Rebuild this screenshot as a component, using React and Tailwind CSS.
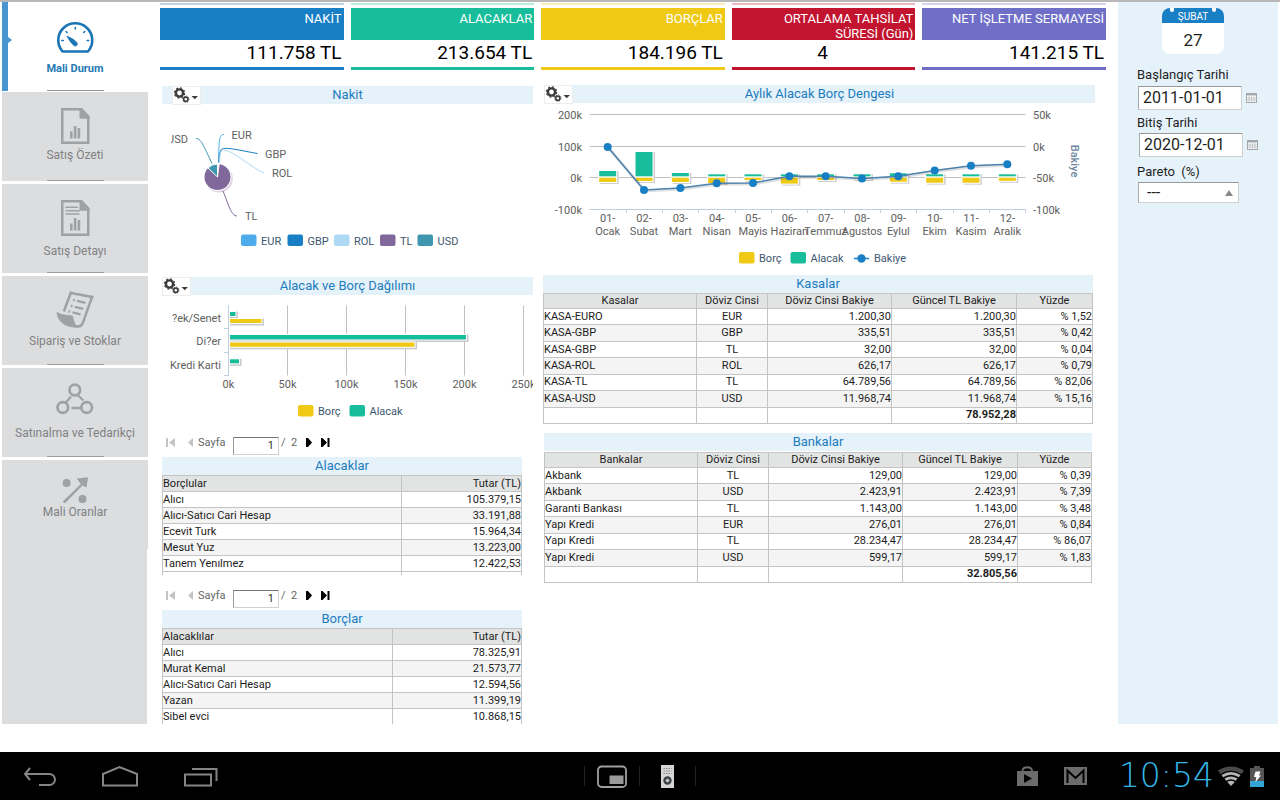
import React from "react";

const kpis = [
  { title: "NAKİT", value: "111.758 TL", bg: "bg-[#187fc5]", align: "text-right" },
  { title: "ALACAKLAR", value: "213.654 TL", bg: "bg-[#18be9b]", align: "text-right" },
  { title: "BORÇLAR", value: "184.196 TL", bg: "bg-[#efc914]", align: "text-right" },
  { title: "ORTALAMA TAHSİLAT SÜRESİ (Gün)", value: "4", bg: "bg-[#c2142f]", align: "text-center" },
  { title: "NET İŞLETME SERMAYESİ", value: "141.215 TL", bg: "bg-[#6f6fc8]", align: "text-right" },
];

const kasalar = [
  ["KASA-EURO", "EUR", "1.200,30", "1.200,30", "% 1,52"],
  ["KASA-GBP", "GBP", "335,51", "335,51", "% 0,42"],
  ["KASA-GBP", "TL", "32,00", "32,00", "% 0,04"],
  ["KASA-ROL", "ROL", "626,17", "626,17", "% 0,79"],
  ["KASA-TL", "TL", "64.789,56", "64.789,56", "% 82,06"],
  ["KASA-USD", "USD", "11.968,74", "11.968,74", "% 15,16"],
];

const bankalar = [
  ["Akbank", "TL", "129,00", "129,00", "% 0,39"],
  ["Akbank", "USD", "2.423,91", "2.423,91", "% 7,39"],
  ["Garanti Bankası", "TL", "1.143,00", "1.143,00", "% 3,48"],
  ["Yapı Kredi", "EUR", "276,01", "276,01", "% 0,84"],
  ["Yapı Kredi", "TL", "28.234,47", "28.234,47", "% 86,07"],
  ["Yapı Kredi", "USD", "599,17", "599,17", "% 1,83"],
];

const alacaklar = [
  ["Alıcı", "105.379,15"],
  ["Alıcı-Satıcı Cari Hesap", "33.191,88"],
  ["Ecevit Turk", "15.964,34"],
  ["Mesut Yuz", "13.223,00"],
  ["Tanem Yenılmez", "12.422,53"],
];

const borclar = [
  ["Alıcı", "78.325,91"],
  ["Murat Kemal", "21.573,77"],
  ["Alıcı-Satıcı Cari Hesap", "12.594,56"],
  ["Yazan", "11.399,19"],
  ["Sibel evci", "10.868,15"],
];

const months = [
  { no: "01-", name: "Ocak", top: 171, bottom: 182, y: 147 },
  { no: "02-", name: "Subat", top: 152, bottom: 181, y: 190 },
  { no: "03-", name: "Mart", top: 173, bottom: 182, y: 188 },
  { no: "04-", name: "Nisan", top: 174.3, bottom: 183, y: 183.3 },
  { no: "05-", name: "Mayis", top: 174.3, bottom: 180, y: 183 },
  { no: "06-", name: "Haziran", top: 174.3, bottom: 183.6, y: 176.3 },
  { no: "07-", name: "Temmuz", top: 174.3, bottom: 180, y: 176.3 },
  { no: "08-", name: "Agustos", top: 174.3, bottom: 179, y: 178.5 },
  { no: "09-", name: "Eylul", top: 173.3, bottom: 181.7, y: 176.3 },
  { no: "10-", name: "Ekim", top: 174.3, bottom: 182.7, y: 170.5 },
  { no: "11-", name: "Kasim", top: 174.3, bottom: 182.7, y: 165.7 },
  { no: "12-", name: "Aralik", top: 174.3, bottom: 180.8, y: 164.2 },
];
const monthX = (i) => 607.7 + i * 36.33;

function GaugeIcon() {
  return (
    <svg className="block h-[37px] w-10" viewBox="55 17 40 37" fill="none" stroke="#1b75b5" strokeWidth="2.2" strokeLinecap="round" aria-hidden="true">
      <path d="M62.5 51.5a17 17 0 1 1 25.5 0z" strokeWidth="2.6" strokeLinejoin="round" />
      <path d="M75.3 27.5v1.5M66 31.5l1 1M84.7 31.500l-1 1M61.800 40.500h1.500M87.200 40.500h1.500" strokeWidth="1.600" />
      <path d="M67.200 36.400c3.500 1 8 3.800 9.800 6.400 1.200 2-1.200 4.200-3 2.800-2.400-2-5-5.700-6.800-9.200z" fill="#1b75b5" strokeWidth="0.800" />
    </svg>
  );
}

function ReportIcon({ lines }) {
  return (
    <svg className="block h-[37px] w-10" viewBox="0 0 40 37" fill="#9fa1a3" aria-hidden="true">
      <path d="M6 1h20.500l8 8.500V37H6zM8.500 3.500v31H32V11.500h-7.500v-8z" fillRule="evenodd" />
      <path d="M25 1h2l7.500 8v2.500h-9.500z" />
      <path d="M15 24.500h2.600v7H15zM18.800 19h2.600v12.500h-2.600zM22.600 21h2.600v10.500h-2.600z" />
      {lines && <path d="M10.500 7.500h12.500v1.500H10.500zM10.500 11h14v1.500h-14zM10.500 14.300h14v1.500h-14z" />}
    </svg>
  );
}

function ScrollIcon() {
  return (
    <svg className="block h-[37px] w-10" viewBox="55 291 40 37" fill="none" stroke="#9fa1a3" aria-hidden="true">
      <path d="M63.800 311.500l7-18.700c7 2 14 2.500 21.400 4.200-3.200 8-6 16.500-9 25-1.400 4-4.500 5-7.500 4" strokeWidth="2.500" />
      <path d="M57 312.300c5 3.300 10.500 2.700 15.500 3.700 1.200 4 1.500 8.500 5 11-8.500 1.200-20.500-4.200-20.500-14.700z" fill="#9fa1a3" strokeWidth="0.800" />
      <path d="M77 300.800l8.500 2M74.800 306.800l8.500 2M72.500 312.300l8 2" strokeWidth="2.300" />
      <path d="M73 299.800l1.800.4M70.800 305.800l1.800.4M68.500 311.300l1.800.4" strokeWidth="2.300" />
    </svg>
  );
}

function NetworkIcon() {
  return (
    <svg className="block h-[37px] w-10" viewBox="55 383 40 37" fill="none" stroke="#9fa1a3" strokeWidth="2.700" aria-hidden="true">
      <circle cx="74.800" cy="390" r="5.300" />
      <circle cx="62.800" cy="407.500" r="5.300" />
      <circle cx="86.700" cy="407.500" r="5.300" />
      <path d="M71 396.500l-5.500 6.500M78 395.500l5.500 5M71.500 408h9.500" strokeWidth="2.300" />
    </svg>
  );
}

function RatioIcon() {
  return (
    <svg className="block h-7 w-10" viewBox="55 475 40 28" fill="#9fa1a3" aria-hidden="true">
      <circle cx="66.700" cy="483" r="4" />
      <circle cx="82.500" cy="499" r="4" />
      <path d="M62.800 501.500l18-17.500-4.300-5.500 11.500-1.300-1.500 10.300-4-2-17.700 18z" />
    </svg>
  );
}

const navItems = [
  { label: "Satış Özeti", icon: <ReportIcon />, gap: "mt-0.5" },
  { label: "Satış Detayı", icon: <ReportIcon lines />, gap: "mt-1.5" },
  { label: "Sipariş ve Stoklar", icon: <ScrollIcon />, gap: "mt-1" },
  { label: "Satınalma ve Tedarikçi", icon: <NetworkIcon />, gap: "mt-1" },
  { label: "Mali Oranlar", icon: <RatioIcon />, gap: "mt-0", last: true },
];

function Sidebar() {
  return (
    <nav className="flex w-[148px] shrink-0 flex-col pl-0.5 text-[12px] leading-[18px] text-[#7f8183]">
      <a href="#mali-durum" className="relative mb-px flex h-[89px] flex-col items-center border-l-[6px] border-[#4796cf] pt-[15px] pr-[6px] text-[11px] font-bold text-[#2478b4]">
        <span className="absolute top-[35px] left-0 border-y-[3px] border-l-4 border-y-transparent border-l-[#4796cf]" />
        <GaugeIcon />
        <span className="mt-1.5">Mali Durum</span>
        <span className="absolute bottom-0 left-[39px] h-px w-[57px] bg-[#969696]" />
      </a>
      <div className="flex grow flex-col gap-[3px]">
        {navItems.map((n) => (
          <a key={n.label} href="#" className="relative flex h-[89px] flex-col items-center bg-[#dcdddf] pt-[15px]">
            {n.icon}
            <span className={n.gap}>{n.label}</span>
            {!n.last && <span className="absolute bottom-0 left-[45px] h-px w-[57px] bg-[#9c9d9f]" />}
          </a>
        ))}
        <div className="-mt-[3px] mr-px grow bg-[#dcdddf]" />
      </div>
    </nav>
  );
}

function GearButton({ className }) {
  return (
    <button type="button" aria-label="Seçenekler" className={"absolute top-0 flex h-[19px] w-[29px] items-start border border-[#ececec] bg-white " + className}>
      <svg className="block h-[17px] w-[26px]" viewBox="0 0 26 17" fill="none" stroke="#3c3c3c" aria-hidden="true">
        <circle cx="6.500" cy="6" r="3.600" strokeWidth="2.400" />
        <circle cx="6.500" cy="6" r="5.100" strokeWidth="1.200" strokeDasharray="2 2" />
        <circle cx="12.800" cy="12.200" r="2.100" strokeWidth="1.600" />
        <circle cx="12.800" cy="12.200" r="3.200" strokeWidth="0.900" strokeDasharray="1.250 1.250" />
        <path d="M18.500 9h6.500l-3.200 3.300z" fill="#3c3c3c" stroke="none" />
      </svg>
    </button>
  );
}

function TitleBar({ children, gear }) {
  return (
    <div className="relative h-[18px] bg-[#e6f2f9]">
      <h2 className="text-center text-[13px] leading-[18px] text-[#1c7cc0]">{children}</h2>
      {gear && <GearButton className={gear} />}
    </div>
  );
}

function PieChart() {
  const legend = [
    ["EUR", "#4facec", 241], ["GBP", "#187fc5", 287.500], ["ROL", "#add9f4", 334], ["TL", "#80689a", 380], ["USD", "#3e97ae", 417.500],
  ];
  return (
    <svg className="block h-[173px] w-full" viewBox="162 104 371 173" preserveAspectRatio="xMinYMin meet" fontSize="11" fill="#606060" role="img" aria-label="Nakit">
      <circle cx="218.800" cy="178.500" r="14" fill="#ddd4e0" />
      <circle cx="217.500" cy="177" r="14" fill="#fff" />
      <circle cx="217.500" cy="177" r="13" fill="#80689a" />
      <path d="M217.500 177L208 168a13 13 0 0 1 9.500-4z" fill="#3e97ae" stroke="#fff" strokeWidth="1" />
      <path d="M217.500 177V163.500h1.800z" fill="#fff" stroke="#fff" strokeWidth="0.800" />
      <g fill="none">
        <path d="M196 138.500c5 0 7 6 16 25" stroke="#3e97ae" />
        <path d="M224 134.500c-5 0-5 6-5.500 28" stroke="#4facec" />
        <path d="M257.500 153.500c-12-2-28-6-34-5-4 .6-4 6-4.500 14" stroke="#187fc5" />
        <path d="M264 173c-12-5-32-23-40-23-4 0-4 5-4.500 12" stroke="#add9f4" />
        <path d="M223 191c5 12 8 25 14 25" stroke="#80689a" />
      </g>
      <text x="188" y="143" textAnchor="end">USD</text>
      <rect x="162" y="130" width="9" height="18" fill="#fff" />
      <text x="231.500" y="139">EUR</text>
      <text x="265" y="158">GBP</text>
      <text x="272" y="177">ROL</text>
      <text x="245" y="220">TL</text>
      {legend.map(([n, c, x]) => (
        <g key={n}>
          <rect x={x} y="234.500" width="15.500" height="11.500" rx="2" fill={c} />
          <text x={x + 20} y="245" fill="#3e576f">{n}</text>
        </g>
      ))}
    </svg>
  );
}

function BarChart() {
  const bars = [
    [312, 235.500, 4, "#18be9b"], [319, 261.500, 4, "#efc914"], [335, 466, 4.500, "#18be9b"], [342.500, 414.500, 4.300, "#efc914"], [359.300, 239, 4, "#18be9b"],
  ];
  const ticks = [[228.500, "0k"], [287.500, "50k"], [346.500, "100k"], [405.500, "150k"], [464.500, "200k"], [523.500, "250k"]];
  return (
    <svg className="block h-[130px] w-full overflow-hidden" viewBox="162 295 371 130" preserveAspectRatio="xMinYMin meet" fontSize="11" fill="#606060" role="img" aria-label="Alacak ve Borç Dağılımı">
      {ticks.map(([x, t]) => (
        <g key={t}>
          <path d={`M${x} 305.500V375.500`} stroke="#c0c0c0" />
          <text x={x} y="388" textAnchor="middle">{t}</text>
        </g>
      ))}
      <path d="M228.500 305.500V375.500M224 328.500h5M224 352.500h5M224 375.500h5" stroke="#c0d0e0" />
      {bars.map(([y, x2, h, c]) => (
        <g key={y}>
          <rect x="230" y={y - 0.500} width={x2 - 227.500} height={h + 3} fill="#c9c9c9" />
          <rect x="229" y={y - 1} width={x2 - 228} height={h + 2} fill="#fff" />
          <rect x="230" y={y} width={x2 - 230} height={h} fill={c} />
        </g>
      ))}
      <text x="221" y="322" textAnchor="end">?ek/Senet</text>
      <text x="221" y="345" textAnchor="end">Di?er</text>
      <text x="221" y="369" textAnchor="end">Kredi Karti</text>
      <rect x="298" y="405" width="15.500" height="11.500" rx="2" fill="#efc914" />
      <text x="318" y="415" fill="#3e576f">Borç</text>
      <rect x="349.500" y="405" width="15.500" height="11.500" rx="2" fill="#18be9b" />
      <text x="369.500" y="415" fill="#3e576f">Alacak</text>
    </svg>
  );
}

function BalanceChart() {
  const rows = [[114.500, "200k", "50k"], [146.500, "100k", "0k"], [177.500, "0k", "-50k"], [209.500, "-100k", "-100k"]];
  const line = months.map((m, i) => `${monthX(i)},${m.y}`).join(" ");
  return (
    <svg className="block h-[173px] w-full" viewBox="544 103 551 173" preserveAspectRatio="xMinYMin meet" fontSize="11" fill="#606060" role="img" aria-label="Aylık Alacak Borç Dengesi">
      {rows.map(([y, l, r]) => (
        <g key={y}>
          <path d={`M589.500 ${y}H1025.500`} stroke="#c0c0c0" />
          <text x="582" y={y + 4.500} textAnchor="end">{l}</text>
          <text x="1033" y={y + 4.500}>{r}</text>
        </g>
      ))}
      {months.map((m, i) => {
        const x = monthX(i) - 8.500;
        return (
          <g key={m.no}>
            <rect x={x + 1} y={m.top} width="18.500" height={m.bottom - m.top + 2} fill="#cfcfcf" />
            <rect x={x - 1} y={m.top - 1} width="19" height={m.bottom - m.top + 2} fill="#fff" />
            <rect x={x} y={m.top} width="17" height={176.300 - m.top} fill="#18be9b" />
            <rect x={x} y="177.700" width="17" height={m.bottom - 177.700} fill="#efc914" />
            <path d={`M${Math.round(monthX(i) + 18) + 0.500} 209v4`} stroke="#c0d0e0" />
            <text x={monthX(i)} y="222" textAnchor="middle">{m.no}</text>
            <text x={monthX(i)} y="235" textAnchor="middle">{m.name}</text>
          </g>
        );
      })}
      <path d="M589.500 209.500H1025.500" stroke="#c0d0e0" />
      <polyline points={line} fill="none" stroke="#000" strokeOpacity="0.120" strokeWidth="3" transform="translate(1 1)" />
      <polyline points={line} fill="none" stroke="#4a82b0" strokeWidth="1.500" />
      {months.map((m, i) => <circle key={m.no} cx={monthX(i)} cy={m.y} r="4" fill="#187fc5" />)}
      <text transform="translate(1071 161) rotate(90)" textAnchor="middle" fontWeight="500" fill="#6d869f">Bakiye</text>
      <g fill="#3e576f">
        <rect x="739" y="252" width="15.500" height="11.500" rx="2" fill="#efc914" />
        <text x="759" y="262">Borç</text>
        <rect x="790.500" y="252" width="15.500" height="11.500" rx="2" fill="#18be9b" />
        <text x="810.500" y="262">Alacak</text>
        <path d="M854 258.500h15" stroke="#187fc5" strokeWidth="1.500" />
        <circle cx="861.500" cy="258.500" r="4.200" fill="#187fc5" />
        <text x="874" y="262">Bakiye</text>
      </g>
    </svg>
  );
}

function AccountTable({ first, rows, total, cols }) {
  const heads = [first, "Döviz Cinsi", "Döviz Cinsi Bakiye", "Güncel TL Bakiye", "Yüzde"];
  return (
    <table className="h-[131px] w-full table-fixed border-collapse border border-[#c4c4c4] text-[11px] leading-[14px] text-[#1c1c1c]">
      <colgroup>{cols.map((c, i) => <col key={i} className={c} />)}</colgroup>
      <thead>
        <tr className="bg-[#e2e4e3]">
          {heads.map((h) => <th key={h} className="border border-[#c4c4c4] p-0 font-normal">{h}</th>)}
        </tr>
      </thead>
      <tbody>
        {rows.map((r, i) => (
          <tr key={i} className="even:bg-[#f4f4f4]">
            {r.map((c, j) => (
              <td key={j} className={"border border-[#c4c4c4] p-0 " + (j === 0 ? "text-left" : j === 1 ? "text-center" : "text-right")}>{c}</td>
            ))}
          </tr>
        ))}
        <tr>
          <td className="border border-[#c4c4c4] p-0" />
          <td className="border border-[#c4c4c4] p-0" />
          <td className="border border-[#c4c4c4] p-0" />
          <td className="border border-[#c4c4c4] p-0 text-right font-bold">{total}</td>
          <td className="border border-[#c4c4c4] p-0" />
        </tr>
      </tbody>
    </table>
  );
}

function PartyTable({ first, rows, col }) {
  return (
    <table className="w-full table-fixed border-collapse text-[11px] leading-[15px] text-[#1c1c1c]">
      <colgroup><col className={col} /><col /></colgroup>
      <thead>
        <tr className="h-4 bg-[#e2e4e3]">
          <th className="border border-[#c4c4c4] p-0 text-left font-normal">{first}</th>
          <th className="border border-[#c4c4c4] p-0 text-right font-normal">Tutar (TL)</th>
        </tr>
      </thead>
      <tbody>
        {rows.map(([a, b]) => (
          <tr key={a} className="h-4 even:bg-[#f4f4f4]">
            <td className="border border-[#c4c4c4] p-0">{a}</td>
            <td className="border border-[#c4c4c4] p-0 text-right">{b}</td>
          </tr>
        ))}
        <tr className="h-4">
          <td className="border border-[#c4c4c4] p-0" />
          <td className="border border-[#c4c4c4] p-0" />
        </tr>
      </tbody>
    </table>
  );
}

function Pager({ id }) {
  return (
    <div className="flex h-[23px] items-start pl-1 text-[11px] leading-[18px] text-[#666]">
      <button type="button" aria-label="İlk sayfa" disabled className="mt-1 mr-3">
        <svg className="block h-[9px] w-[10px]" viewBox="0 0 10 9" fill="#c4c4c4"><path d="M0 0h2v9H0zM9 0v9L3 4.500z" /></svg>
      </button>
      <button type="button" aria-label="Önceki sayfa" disabled className="mt-1 mr-1">
        <svg className="block h-[9px] w-[6px]" viewBox="0 0 6 9" fill="#c4c4c4"><path d="M5 0v9L0 4.500z" /></svg>
      </button>
      <label htmlFor={id} className="w-[35px]">Sayfa</label>
      <input id={id} defaultValue="1" className="mt-[3px] h-[18px] w-[46px] border border-[#d0d0d0] border-t-[#777] border-l-[#999] bg-white pr-1 text-right text-[11px] text-[#333]" />
      <span className="ml-0.5 whitespace-pre">/  2</span>
      <button type="button" aria-label="Sonraki sayfa" className="mt-1 ml-[9px]">
        <svg className="block h-[9px] w-[6px]" viewBox="0 0 6 9" fill="#000"><path d="M0 0l2 0 4 4.500L2 9H0z" /></svg>
      </button>
      <button type="button" aria-label="Son sayfa" className="mt-1 ml-[9px]">
        <svg className="block h-[9px] w-[9px]" viewBox="0 0 9 9" fill="#000"><path d="M0 0h1.500L6 4.500 1.500 9H0zM6.500 0h2v9h-2z" /></svg>
      </button>
    </div>
  );
}

function CalendarButton({ label }) {
  return (
    <button type="button" aria-label={label} className="ml-1">
      <svg className="block h-[10px] w-[11px]" viewBox="0 0 11 10" aria-hidden="true">
        <rect x="0.500" y="0.500" width="10" height="9" fill="#fff" stroke="#a3a8ac" />
        <path d="M0 1.500h11" stroke="#a3a8ac" strokeWidth="2" />
        <path d="M3 3v6M5.500 3v6M8 3v6M1 5h9M1 7h9" stroke="#b9bdc1" strokeWidth="0.800" />
      </svg>
    </button>
  );
}

function FilterPanel() {
  return (
    <aside className="w-[162px] shrink-0 border-r-2 border-white bg-[#e6f2f9] pl-[19px] text-[13px] text-[#1f1f1f]">
      <div className="mt-1.5 ml-[25px] w-[62px] overflow-hidden rounded-lg bg-white text-center">
        <div className="relative h-[15px] bg-[#187fc5] text-[10px] leading-[17px] text-white">
          ŞUBAT
          <span className="absolute top-0 left-2 h-1 w-1 rounded-b bg-white" />
          <span className="absolute top-0 right-2 h-1 w-1 rounded-b bg-white" />
        </div>
        <div className="h-[31px] text-[17px] leading-[35px]">27</div>
      </div>
      <label htmlFor="start" className="mt-3 block leading-[18px]">Başlangıç Tarihi</label>
      <div className="mt-0.5 flex items-center pl-px">
        <input id="start" defaultValue="2011-01-01" className="h-6 w-[104px] border border-[#d0d0d0] border-t-[#999] border-l-[#aaa] bg-white pl-1 text-[16px]" />
        <CalendarButton label="Başlangıç tarihi seç" />
      </div>
      <label htmlFor="end" className="mt-1 block leading-[18px]">Bitiş Tarihi</label>
      <div className="mt-px flex items-center pl-0.5">
        <input id="end" defaultValue="2020-12-01" className="h-6 w-[104px] border border-[#d0d0d0] border-t-[#999] border-l-[#aaa] bg-white pl-1 text-[16px]" />
        <CalendarButton label="Bitiş tarihi seç" />
      </div>
      <label htmlFor="pareto" className="mt-1.5 block leading-[18px] whitespace-pre">Pareto  (%)</label>
      <div className="relative mt-px ml-px w-[101px]">
        <select id="pareto" className="block h-[21px] w-full appearance-none border border-[#d0d0d0] border-t-[#999] border-l-[#aaa] bg-white pl-2 text-[16px] leading-none">
          <option>---</option>
        </select>
        <span className="pointer-events-none absolute top-2 right-1.5 border-x-4 border-b-[6px] border-x-transparent border-b-[#888]" />
      </div>
    </aside>
  );
}

function SystemBar() {
  return (
    <footer className="grid h-12 grid-cols-3 items-center bg-black">
      <div className="flex items-center pl-[22px]">
        <button type="button" aria-label="Geri">
          <svg className="block h-6 w-9" viewBox="0 0 36 24" fill="none" stroke="#858585" strokeWidth="2"><path d="M8 4L3 10l5 6M3 10h24.500a5.500 5.500 0 0 1 0 11H17" /></svg>
        </button>
        <button type="button" aria-label="Ana ekran" className="ml-[42px]">
          <svg className="block h-6 w-10" viewBox="0 0 40 24" fill="none" stroke="#858585" strokeWidth="2"><path d="M3 21.500V10L19.500 3 37 10v11.500z" /></svg>
        </button>
        <button type="button" aria-label="Son uygulamalar" className="ml-[42px]">
          <svg className="block h-6 w-9" viewBox="0 0 36 24" fill="none" stroke="#858585" strokeWidth="2"><path d="M3 10.500h26V21.500H3zM10 5h24.500v12" /></svg>
        </button>
      </div>
      <div className="flex items-center justify-center">
        <span className="h-5 w-px bg-[#222]" />
        <button type="button" aria-label="Küçük uygulamalar" className="mx-3">
          <svg className="block h-6 w-[30px]" viewBox="0 0 30 24"><rect x="1" y="2.500" width="28" height="20.500" rx="3.500" fill="none" stroke="#a0a0a0" strokeWidth="1.800" /><rect x="12.500" y="11.500" width="14" height="8.500" fill="#999" /></svg>
        </button>
        <span className="h-5 w-px bg-[#222]" />
        <button type="button" aria-label="Uzaktan kumanda" className="mx-[21px]">
          <svg className="block h-6 w-[13px]" viewBox="0 0 13 24"><path d="M0 1h13v23H0z" fill="#d6d6d6" /><path d="M2.500 4.500h8M2.500 7h8M2.500 9.500h8" stroke="#888" strokeDasharray="1.500 1" /><circle cx="6.500" cy="16.500" r="4.200" fill="#3f4346" /><circle cx="6.500" cy="16.500" r="1.800" fill="#bcc6cc" /></svg>
        </button>
        <span className="h-5 w-px bg-[#222]" />
      </div>
      <div className="flex items-center justify-end pr-4">
        <svg className="h-[22px] w-[21px]" viewBox="0 0 21 22" aria-hidden="true"><path d="M0 6h21v15H0z" fill="#6c6c6c" /><path d="M5.500 6V5a5 4 0 0 1 9.500 0v1" fill="none" stroke="#6c6c6c" strokeWidth="1.800" /><path d="M7 9l8 4.500-8 4.500z" /></svg>
        <svg className="ml-[26px] h-[18px] w-[23px]" viewBox="0 0 23 18" aria-hidden="true"><path d="M0 0h23v18H0z" fill="#6c6c6c" /><path d="M3.500 16V3.500l8 7.500 8-7.500V16" fill="none" stroke="#000" strokeWidth="2" /></svg>
        <time className="ml-[32px] font-['DejaVu_Sans','Roboto',sans-serif] text-[33px] leading-[48px] font-extralight text-[#33b5e5]">10:54</time>
        <svg className="ml-1 h-5 w-[26px]" viewBox="0 0 26 20" aria-hidden="true"><path d="M0 4.500Q13-3.500 26 4.500l-2.500 3.500Q13 1.500 2.500 8z" fill="#4a4a4a" /><path d="M3.500 9q9.500-6 19 0l-1.700 2.200q-7.800-5-15.600 0zM6.500 12.500q6.500-4.200 13 0l-1.700 2.200q-4.800-3-9.600 0zM9.200 16q3.800-2.400 7.600 0L13 20z" fill="#b5b5b5" /></svg>
        <svg className="ml-1.5 h-[21px] w-[14px]" viewBox="0 0 14 21" aria-hidden="true"><path d="M4 0h6v2h4v19H0V2h4z" fill="#555" /><path d="M0 15h14v6H0z" fill="#33a5d5" /><path d="M5.500 5.500h5L9 9.500h2L5.500 16l.8-5H4z" fill="#fff" /></svg>
      </div>
    </footer>
  );
}

export default function App() {
  return (
    <div className="flex min-h-screen flex-col bg-white font-['Roboto','Noto_Sans',sans-serif]">
      <div className="h-0.5 bg-[#b9b7b8]" />
      <main className="mb-7 flex grow">
        <Sidebar />
        <div className="min-w-0 grow">
          <section className="mr-3 ml-3 grid grid-cols-5 gap-[7px]">
            {kpis.map((k) => (
              <div key={k.title} className="pt-px">
                <div className={"h-0.5 opacity-30 " + k.bg} />
                <h2 className={"mt-[3px] h-8 pt-[3px] pr-0.5 pl-5 text-right text-[13px] leading-[15px] text-white " + k.bg}>{k.title}</h2>
                <p className={"h-[27px] pr-0.5 text-[19px] leading-[26px] text-black " + k.align}>{k.value}</p>
                <div className={"h-[3px] " + k.bg} />
              </div>
            ))}
          </section>
          <div className="mt-[15px] mr-[23px] ml-[14px] grid grid-cols-[371fr_551fr] gap-x-[11px]">
            <div className="min-w-0 pt-px">
              <TitleBar gear="left-2.5">Nakit</TitleBar>
              <PieChart />
              <TitleBar gear="left-0">Alacak ve Borç Dağılımı</TitleBar>
              <BarChart />
              <div className="mr-[11px] pt-[9px]">
                <Pager id="page-alacak" />
                <TitleBar>Alacaklar</TitleBar>
                <div className="h-[100px] overflow-hidden">
                  <PartyTable first="Borçlular" rows={alacaklar} col="w-[239px]" />
                </div>
                <div className="h-3" />
                <Pager id="page-borc" />
                <TitleBar>Borçlar</TitleBar>
                <div className="h-[96px] overflow-hidden">
                  <PartyTable first="Alacaklılar" rows={borclar} col="w-[230px]" />
                </div>
              </div>
            </div>
            <div className="min-w-0">
              <TitleBar gear="left-0">Aylık Alacak Borç Dengesi</TitleBar>
              <BalanceChart />
              <div className="mr-0.5 -ml-px">
                <div className="-mt-px"><TitleBar>Kasalar</TitleBar></div>
                <AccountTable first="Kasalar" rows={kasalar} total="78.952,28" cols={["w-[153px]", "w-[71px]", "w-[124px]", "w-[125px]", ""]} />
              </div>
              <div className="mt-[9px] mr-[3px]">
                <TitleBar>Bankalar</TitleBar>
                <div className="pt-px">
                  <AccountTable first="Bankalar" rows={bankalar} total="32.805,56" cols={["w-[153px]", "w-[71px]", "w-[134px]", "w-[115px]", ""]} />
                </div>
              </div>
            </div>
          </div>
        </div>
        <FilterPanel />
      </main>
      <SystemBar />
    </div>
  );
}
